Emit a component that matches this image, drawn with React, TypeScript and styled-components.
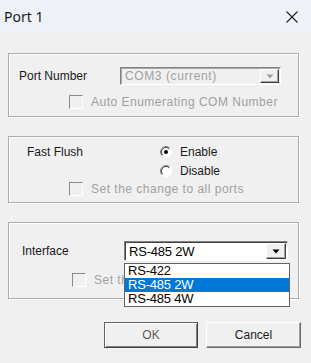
import styled, { createGlobalStyle } from 'styled-components';

const GlobalStyle = createGlobalStyle`
  html, body {
    margin: 0;
    padding: 0;
    background: #f0f0f0;
    overflow: hidden;
  }

  * {
    box-sizing: border-box;
  }
`;

const INTERFACES = ['RS-422', 'RS-485 2W', 'RS-485 4W'];
const SELECTED_INTERFACE = 'RS-485 2W';

const CloseIcon = () => (
  <svg width="12" height="12" viewBox="0 0 12 12">
    <path d="M0.5 0.5 L11.5 11.5 M11.5 0.5 L0.5 11.5" stroke="#1f1f1f" strokeWidth="1.1" fill="none" />
  </svg>
);

const RadioIcon = ({ checked }: { checked: boolean }) => (
  <svg width="12" height="12" viewBox="0 0 12 12">
    <circle cx="6" cy="6" r="5.5" fill="#fff" />
    <path d="M2.11 9.89 A5.5 5.5 0 0 1 9.89 2.11" stroke="#808080" strokeWidth="1" fill="none" />
    <path d="M2.8 9.2 A4.5 4.5 0 0 1 9.2 2.8" stroke="#404040" strokeWidth="1" fill="none" />
    <path d="M9.89 2.11 A5.5 5.5 0 0 1 2.11 9.89" stroke="#ffffff" strokeWidth="1" fill="none" />
    {checked && <circle cx="6" cy="6" r="2" fill="#000" />}
  </svg>
);

const ArrowIcon = ({ disabled }: { disabled?: boolean }) => (
  <svg width="8" height="5" viewBox="0 0 8 5">
    <path d="M0.5 0.5 L7.5 0.5 L4 4.5 Z" fill={disabled ? '#a0a0a0' : '#000'} />
  </svg>
);

const App = () => {
  return (
    <>
      <GlobalStyle />
      <Window>
        <TitleBar>
          <TitleText>Port 1</TitleText>
          <CloseButton>
            <CloseIcon />
          </CloseButton>
        </TitleBar>

        <Content>
          <Group $padding="13px 10px 7px 10px">
            <FieldRow $labelWidth={101}>
              <Label>Port Number</Label>
              <Combo $width={161} $height={18} $disabled>
                <ComboText $disabled>COM3 (current)</ComboText>
                <ComboButton $disabled>
                  <ArrowIcon disabled />
                </ComboButton>
              </Combo>
            </FieldRow>
            <CheckRow $top={10} $left={50}>
              <CheckBox />
              <CheckLabel>Auto Enumerating COM Number</CheckLabel>
            </CheckRow>
          </Group>

          <Group $padding="8px 10px 6px 18px">
            <FlushRow>
              <FlushLabel>Fast Flush</FlushLabel>
              <RadioList>
                <RadioRow>
                  <RadioIcon checked />
                  <RadioText>Enable</RadioText>
                </RadioRow>
                <RadioRow>
                  <RadioIcon checked={false} />
                  <RadioText>Disable</RadioText>
                </RadioRow>
              </RadioList>
            </FlushRow>
            <CheckRow $top={4} $left={42}>
              <CheckBox />
              <CheckLabel>Set the change to all ports</CheckLabel>
            </CheckRow>
          </Group>

          <Group $padding="18px 10px 11px 13px" $gap={23}>
            <FieldRow $labelWidth={102}>
              <Label>Interface</Label>
              <Combo $width={164} $height={20}>
                <ComboText>{SELECTED_INTERFACE}</ComboText>
                <ComboButton>
                  <ArrowIcon />
                </ComboButton>
                <DropList>
                  {INTERFACES.map((item) => (
                    <DropItem key={item} $selected={item === SELECTED_INTERFACE}>
                      {item}
                    </DropItem>
                  ))}
                </DropList>
              </Combo>
            </FieldRow>
            <CheckRow $top={12} $left={50}>
              <CheckBox />
              <CheckLabel>Set the change to all ports</CheckLabel>
            </CheckRow>
          </Group>

          <ButtonRow>
            <DialogButton $default>OK</DialogButton>
            <DialogButton>Cancel</DialogButton>
          </ButtonRow>
        </Content>
      </Window>
    </>
  );
};

const Window = styled.div`
  display: flex;
  flex-direction: column;
  width: 311px;
  height: 363px;
  background: #f0f0f0;
  font-family: 'Liberation Sans', Arial, sans-serif;
  font-size: 12px;
  color: #1a1a1a;
`;

const TitleBar = styled.header`
  display: flex;
  justify-content: space-between;
  align-items: center;
  height: 33px;
  padding: 0 13px 0 4px;
  background: #eef2f7;
`;

const TitleText = styled.span`
  font-family: 'Noto Sans', 'Open Sans', sans-serif;
  font-size: 14px;
  color: #1a1a1a;
`;

const CloseButton = styled.span`
  display: flex;
  align-items: center;
`;

const Content = styled.main`
  display: flex;
  flex-direction: column;
  padding: 20px 12px 0 8px;
`;

const Group = styled.section<{ $padding: string; $gap?: number }>`
  display: flex;
  flex-direction: column;
  width: 291px;
  padding: ${({ $padding }) => $padding};
  margin-bottom: ${({ $gap }) => $gap ?? 19}px;
  border: 1px solid #acacac;
  box-shadow: inset 1px 1px 0 #ffffff, 1px 1px 0 #ffffff;
`;

const FieldRow = styled.div<{ $labelWidth: number }>`
  display: grid;
  grid-template-columns: ${({ $labelWidth }) => $labelWidth}px auto;
  align-items: center;
`;

const Label = styled.span`
  font-size: 12px;
  color: #1a1a1a;
`;

const Combo = styled.div<{ $width: number; $height: number; $disabled?: boolean }>`
  position: relative;
  display: flex;
  align-items: center;
  width: ${({ $width }) => $width}px;
  height: ${({ $height }) => $height}px;
  padding: 0 1px 0 3px;
  background: ${({ $disabled }) => ($disabled ? '#f0f0f0' : '#ffffff')};
  border: 1px solid;
  border-color: #828282 #ffffff #ffffff #828282;
  box-shadow: ${({ $disabled }) => ($disabled ? 'inset 1px 1px 0 #a8a8a8' : 'inset 1px 1px 0 #404040')};
`;

const ComboText = styled.span<{ $disabled?: boolean }>`
  flex: 1;
  padding-left: 1px;
  font-size: ${({ $disabled }) => ($disabled ? '12px' : '13px')};
  letter-spacing: ${({ $disabled }) => ($disabled ? '0.6px' : '-0.2px')};
  color: ${({ $disabled }) => ($disabled ? '#a0a0a0' : '#000000')};
  white-space: nowrap;
`;

const ComboButton = styled.span<{ $disabled?: boolean }>`
  display: flex;
  justify-content: center;
  align-items: center;
  width: ${({ $disabled }) => ($disabled ? 19 : 20)}px;
  height: ${({ $disabled }) => ($disabled ? 14 : 16)}px;
  background: #f0f0f0;
  border: 1px solid;
  border-color: #ffffff #404040 #404040 #ffffff;
  box-shadow: inset -1px -1px 0 #a0a0a0;
`;

const DropList = styled.ul`
  position: absolute;
  top: 21px;
  left: -1px;
  width: 166px;
  margin: 0;
  padding: 0;
  list-style: none;
  background: #ffffff;
  border: 1px solid #646464;
  z-index: 2;
`;

const DropItem = styled.li<{ $selected: boolean }>`
  height: 14px;
  padding-left: 3px;
  font-size: 13px;
  line-height: 14px;
  letter-spacing: -0.2px;
  color: ${({ $selected }) => ($selected ? '#ffffff' : '#000000')};
  background: ${({ $selected }) => ($selected ? '#0078d7' : 'transparent')};
`;

const CheckRow = styled.div<{ $top: number; $left: number }>`
  display: flex;
  align-items: center;
  gap: 8px;
  height: 14px;
  margin-top: ${({ $top }) => $top}px;
  margin-left: ${({ $left }) => $left}px;
`;

const CheckBox = styled.span`
  width: 14px;
  height: 14px;
  flex-shrink: 0;
  background: #f0f0f0;
  border: 1px solid;
  border-color: #8a8a8a #ffffff #ffffff #8a8a8a;
`;

const CheckLabel = styled.span`
  font-size: 12px;
  letter-spacing: 0.5px;
  color: #a0a0a0;
  white-space: nowrap;
`;

const FlushRow = styled.div`
  display: grid;
  grid-template-columns: 133px auto;
  align-items: start;
`;

const FlushLabel = styled.span`
  font-size: 12px;
`;

const RadioList = styled.div`
  display: flex;
  flex-direction: column;
  gap: 5px;
`;

const RadioRow = styled.div`
  display: flex;
  align-items: center;
  gap: 8px;
  height: 14px;
`;

const RadioText = styled.span`
  font-size: 12px;
  color: #1a1a1a;
`;

const ButtonRow = styled.div`
  display: flex;
  justify-content: flex-end;
  gap: 8px;
  margin-right: -2px;
`;

const DialogButton = styled.button<{ $default?: boolean }>`
  width: ${({ $default }) => ($default ? 94 : 95)}px;
  height: 26px;
  padding: 0;
  font-family: 'Liberation Sans', Arial, sans-serif;
  font-size: 12px;
  color: ${({ $default }) => ($default ? '#5a5a5a' : '#1a1a1a')};
  background: #f0f0f0;
  border: 1px solid;
  border-color: ${({ $default }) =>
    $default ? '#646464 #404040 #404040 #646464' : '#ffffff #696969 #696969 #ffffff'};
  box-shadow: ${({ $default }) =>
    $default ? 'inset 1px 1px 0 #ffffff, inset -1px -1px 0 #808080' : 'inset -1px -1px 0 #a0a0a0'};
`;

export default App;
